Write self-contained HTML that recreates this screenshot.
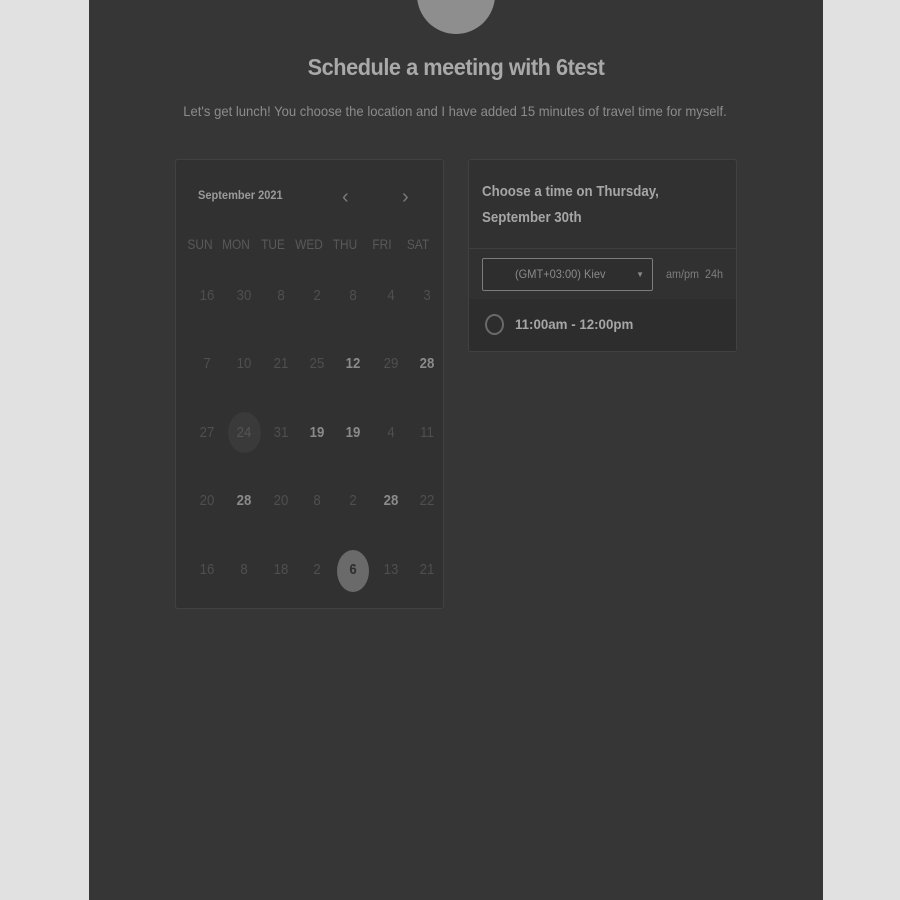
<!DOCTYPE html>
<html><head><style>
body{margin:0;width:900px;height:900px;background:#e1e1e1;font-family:"Liberation Sans",sans-serif;position:relative;overflow:hidden}
.panel{position:absolute;left:89px;top:0;width:734px;height:900px;background:#363636}
.av{position:absolute;left:417px;top:-44px;width:78px;height:78px;border-radius:50%;background:#8e8e8e}
.t{position:absolute;left:0;width:900px;text-align:center}
.card{position:absolute;background:#313131;border:1px solid #414141;border-radius:3px;box-sizing:border-box}
.c{position:absolute;width:36px;text-align:center;font-size:15px;color:#4f4f4f;transform:translate(-18px,-9px) scaleX(.88)}
.b{color:#8a8a8a;font-weight:bold}
.h{position:absolute;text-align:center;width:40px;font-size:14px;color:#595959;transform:translate(-20px,-8px) scaleX(.85)}
.sx{display:inline-block;transform-origin:left center}
</style></head><body>
<div class="panel"></div>
<div class="av"></div>
<div class="t" style="top:54px;font-size:23px;font-weight:bold;color:#a9a9a9;letter-spacing:-0.5px;transform:scaleX(.945);left:6px">Schedule a meeting with 6test</div>
<div class="t" style="top:103px;font-size:14px;color:#8c8c8c;left:5px;transform:scaleX(.933)">Let's get lunch! You choose the location and I have added 15 minutes of travel time for myself.</div>
<div class="card" style="left:175px;top:159px;width:269px;height:450px"></div>
<div style="position:absolute;left:198px;top:188px;font-size:12px;font-weight:bold;color:#9a9a9a;transform:scaleX(.92);transform-origin:left">September 2021</div>
<div style="position:absolute;left:342px;top:186px;font-size:20px;color:#7a7a7a">&#8249;</div>
<div style="position:absolute;left:402px;top:186px;font-size:20px;color:#7a7a7a">&#8250;</div>
<div style="position:absolute;left:228px;top:412px;width:33px;height:41px;border-radius:50%;background:#3a3a3a"></div>
<div style="position:absolute;left:337px;top:550px;width:32px;height:42px;border-radius:50%;background:#6a6a6a"></div>
<div id="g"></div>
<div class="card" style="left:468px;top:159px;width:269px;height:193px;overflow:hidden">
<div style="position:absolute;left:0;top:88px;width:100%;border-top:1px solid #3e3e3e"></div>
<div style="position:absolute;left:0;top:139px;width:100%;height:60px;background:#2d2d2d"></div>
</div>
<div style="position:absolute;left:482px;top:179px;font-size:15px;font-weight:bold;color:#a6a6a6;line-height:26px;transform:scaleX(.885);transform-origin:left">Choose a time on Thursday,<br>September 30th</div>
<div style="position:absolute;left:482px;top:258px;width:171px;height:33px;box-sizing:border-box;border:1px solid #7c7c7c;border-radius:2px;background:#2e2e2e;color:#8a8a8a;font-size:12px;line-height:31px;padding-left:32px"><span class="sx" style="transform:scaleX(.92)">(GMT+03:00) Kiev</span><span style="position:absolute;right:8px;top:0;font-size:8px">&#9660;</span></div>
<div style="position:absolute;left:666px;top:267px;font-size:12px;color:#7e7e7e;transform:scaleX(.9);transform-origin:left">am/pm&nbsp; 24h</div>
<div style="position:absolute;left:485px;top:314px;width:19px;height:21px;border:2px solid #6a6a6a;border-radius:50%;box-sizing:border-box"></div>
<div style="position:absolute;left:515px;top:316px;font-size:14px;font-weight:bold;color:#a6a6a6;transform:scaleX(.95);transform-origin:left">11:00am - 12:00pm</div>
<script>
var xs=[207,244,281,317,353,391,427],hs=["SUN","MON","TUE","WED","THU","FRI","SAT"],ys=[296,364,433,501,570];
var hx=[200,236,273,309,345,382,418];
var d=[["16","30","8","2","8","4","3"],["7","10","21","25","*12","29","*28"],["27","24","31","*19","*19","4","11"],["20","*28","20","8","2","*28","22"],["16","8","18","2","6","13","21"]];
var h="";
for(var i=0;i<7;i++){h+='<div class="h" style="left:'+hx[i]+'px;top:244px">'+hs[i]+'</div>';}
for(var r=0;r<5;r++)for(var i=0;i<7;i++){var v=d[r][i],b=v[0]=="*";if(b)v=v.slice(1);var st="";if(r==4&&i==4)st="color:#2e2e2e;font-weight:bold;";if(r==2&&i==1)st="color:#555;";h+='<div class="c'+(b?' b':'')+'" style="left:'+xs[i]+'px;top:'+ys[r]+'px;'+st+'">'+v+'</div>';}
document.getElementById("g").innerHTML=h;
</script>
</body></html>
